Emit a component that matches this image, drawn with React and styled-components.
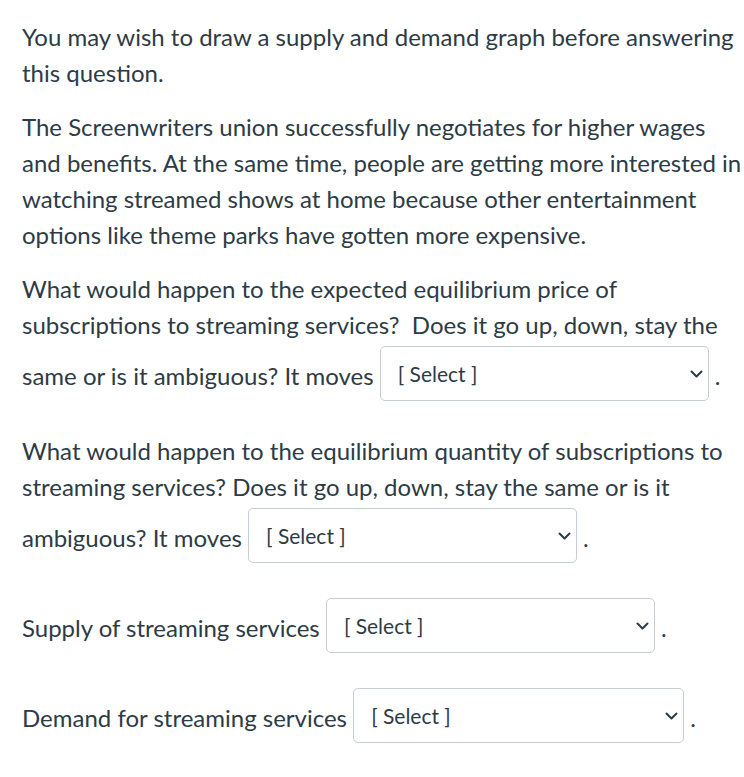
import React from "react";
import styled, { createGlobalStyle } from "styled-components";

const Global = createGlobalStyle`
  html, body { margin: 0; padding: 0; background: #ffffff; }
  body { font-family: Lato, "Open Sans", "Liberation Sans", sans-serif; }
`;

const Page = styled.div`
  padding: 19px 2px 0 22px;
  color: #2d3b45;
  font-family: Lato, "Open Sans", "Liberation Sans", sans-serif;
  font-size: 24px;
  line-height: 36px;
`;

const Para = styled.p`
  margin: 0 0 18px 0;
`;

const SelectWrap = styled.span`
  position: relative;
  display: inline-block;
  vertical-align: middle;
  margin: 3px 6px 14px 0;
`;

const NativeSelect = styled.select`
  display: block;
  appearance: none;
  -webkit-appearance: none;
  box-sizing: border-box;
  width: ${(p) => p.$width}px;
  height: 55px;
  margin: 0;
  padding: 0 40px 0 17px;
  border: 1px solid #c7cdd1;
  border-radius: 5px;
  background: #ffffff;
  color: #2d3b45;
  font-family: Lato, "Open Sans", "Liberation Sans", sans-serif;
  font-size: 21px;
  line-height: 28px;
  outline: none;
`;

const Chevron = styled.svg`
  position: absolute;
  right: 6px;
  top: 50%;
  width: 13px;
  height: 8px;
  margin-top: -4px;
  pointer-events: none;
`;

function Dropdown({ width = 328 }) {
  return (
    <SelectWrap>
      <NativeSelect $width={width} defaultValue="">
        <option value="">[ Select ]</option>
        <option value="up">up</option>
        <option value="down">down</option>
        <option value="same">stays the same</option>
        <option value="ambiguous">is ambiguous</option>
      </NativeSelect>
      <Chevron viewBox="0 0 13 8" aria-hidden="true">
        <path d="M1.5 1.5 L6.5 6.5 L11.5 1.5" fill="none" stroke="#2d3b45" strokeWidth="2" strokeLinecap="round" strokeLinejoin="round" />
      </Chevron>
    </SelectWrap>
  );
}

export default function App() {
  return (
    <>
      <Global />
      <Page>
        <Para>You may wish to draw a supply and demand graph before answering this question.</Para>
        <Para>
          The Screenwriters union successfully negotiates for higher wages and benefits. At the same time, people are getting more interested in watching streamed shows at home because other entertainment options like theme parks have gotten more expensive.
        </Para>
        <Para>
          What would happen to the expected equilibrium price of subscriptions to streaming services?{"\u00a0"} Does it go up, down, stay the same or is it ambiguous? It moves <Dropdown width={329} />.
        </Para>
        <Para>
          What would happen to the equilibrium quantity of subscriptions to streaming services? Does it go up, down, stay the same or is it ambiguous? It moves <Dropdown width={329} />.
        </Para>
        <Para>
          Supply of streaming services <Dropdown width={329} />.
        </Para>
        <Para>
          Demand for streaming services <Dropdown width={331} />.
        </Para>
      </Page>
    </>
  );
}
